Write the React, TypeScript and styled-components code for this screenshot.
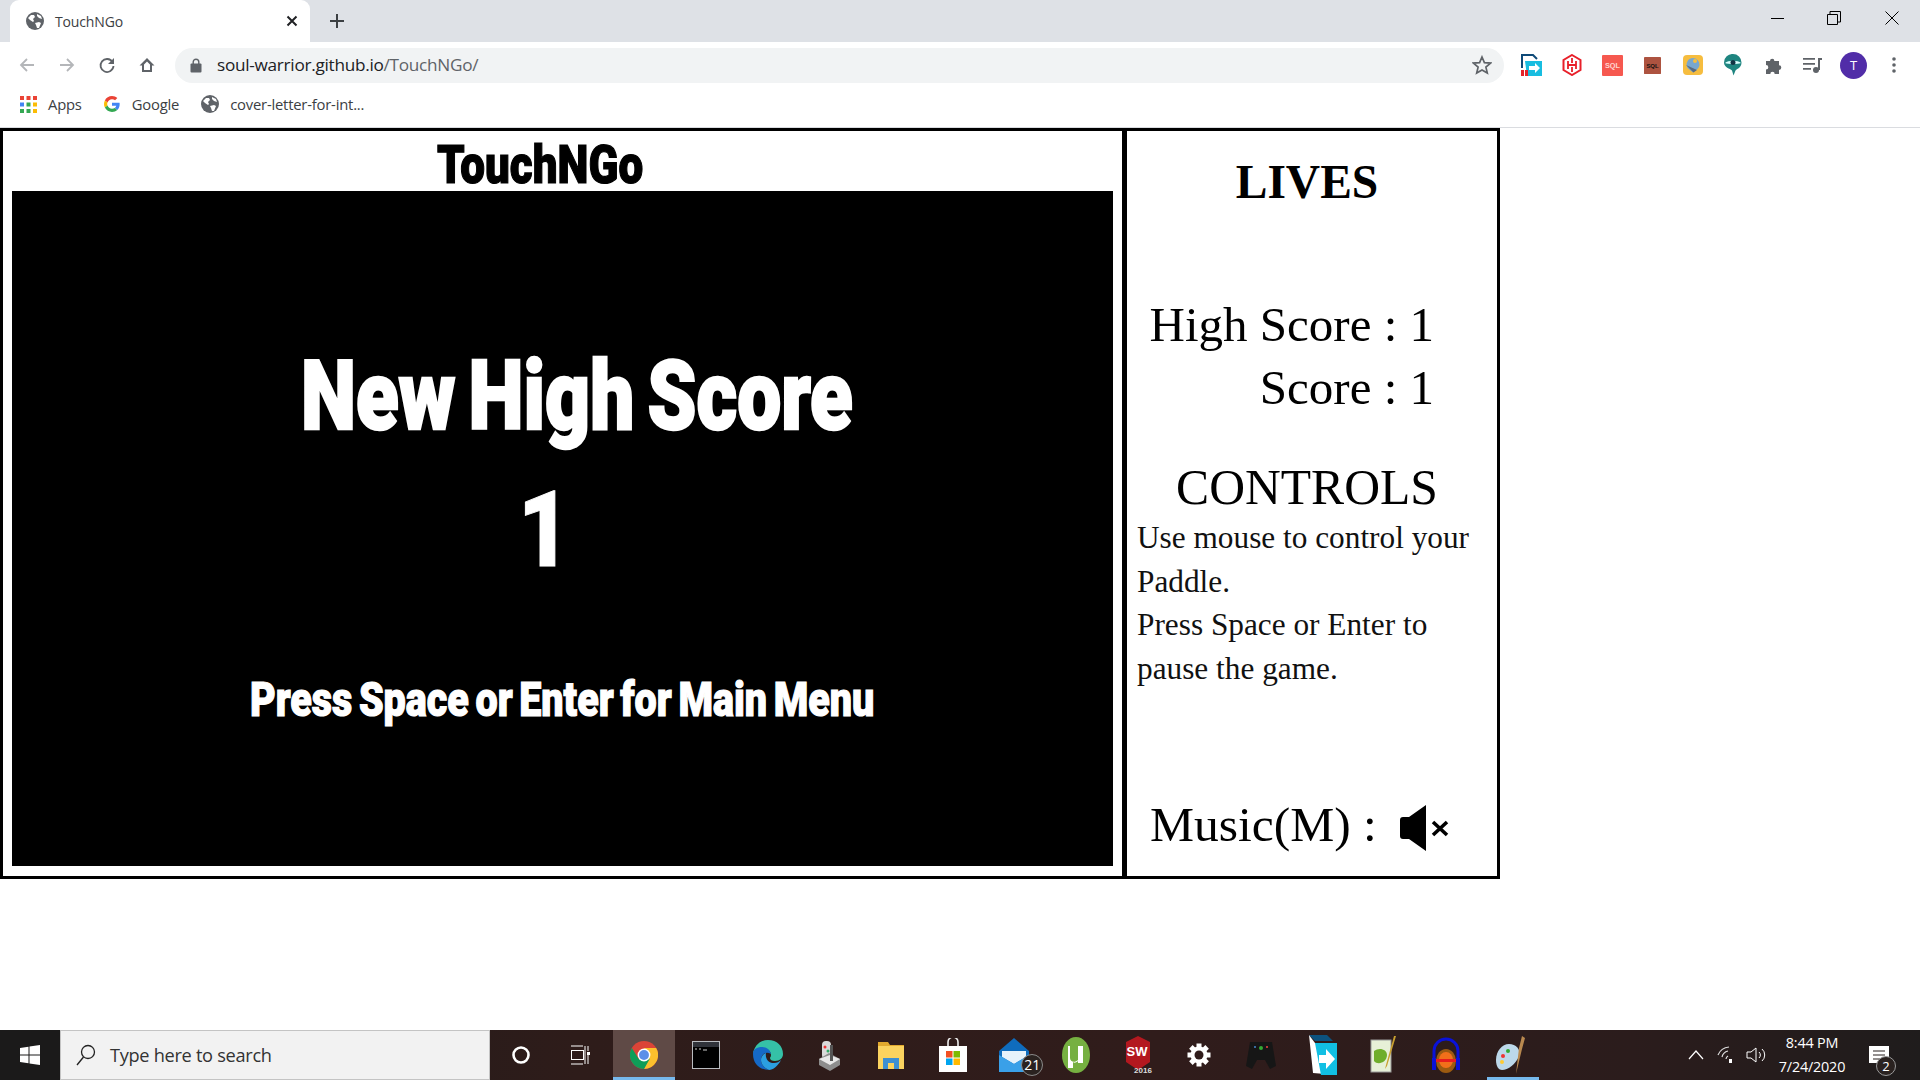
import React from "react";
import styled, { createGlobalStyle } from "styled-components";

const Global = createGlobalStyle`
  html, body { margin: 0; padding: 0; background: #fff; }
  * { box-sizing: border-box; }
`;

const UI = `"Open Sans", "Noto Sans", sans-serif`;
const SERIF = `"Liberation Serif", "Times New Roman", serif`;
const HEAVY = `Roboto, "Liberation Sans", Arial, sans-serif`;

const Page = styled.div`
  width: 1920px;
  height: 1080px;
  display: flex;
  flex-direction: column;
  overflow: hidden;
  background: #fff;
`;

/* ---------- browser chrome ---------- */
const TabStrip = styled.div`
  height: 42px;
  flex: none;
  background: #dee1e6;
  display: flex;
  align-items: flex-end;
  padding-left: 10px;
`;
const Tab = styled.div`
  width: 300px;
  height: 42px;
  background: #fff;
  border-radius: 9px 9px 0 0;
  display: flex;
  align-items: center;
  padding-left: 16px;
  padding-right: 12px;
  gap: 11px;
`;
const TabTitle = styled.span`
  flex: 1;
  font: 14px ${UI};
  letter-spacing: -0.15px;
  color: #3c4043;
`;
const NewTab = styled.div`
  width: 54px;
  height: 42px;
  display: flex;
  align-items: center;
  justify-content: center;
`;
const WindowButtons = styled.div`
  margin-left: auto;
  height: 36px;
  align-self: flex-start;
  display: flex;
`;
const WindowButton = styled.div`
  width: 57px;
  height: 36px;
  display: flex;
  align-items: center;
  justify-content: center;
  &:last-child {
    margin-left: 1px;
  }
`;
const Toolbar = styled.div`
  height: 46px;
  flex: none;
  background: #fff;
  display: flex;
  align-items: center;
  padding-left: 7px;
`;
const NavButton = styled.div`
  width: 40px;
  height: 40px;
  display: flex;
  align-items: center;
  justify-content: center;
`;
const Omnibox = styled.div`
  width: 1329px;
  height: 35px;
  margin-left: 8px;
  margin-right: 8px;
  border-radius: 18px;
  background: #f1f3f4;
  display: flex;
  align-items: center;
  padding-left: 15px;
  padding-right: 12px;
`;
const Url = styled.span`
  flex: 1;
  margin-left: 15px;
  margin-top: -2px;
  font: 17.2px ${UI};
  letter-spacing: -0.28px;
  color: #202124;
`;
const UrlPath = styled.span`
  color: #5f6368;
`;
const ExtensionSlot = styled.div`
  width: 40.2px;
  height: 40px;
  flex: none;
  display: flex;
  align-items: center;
  justify-content: center;
`;
const Avatar = styled.div`
  width: 27px;
  height: 27px;
  border-radius: 50%;
  background: #512da8;
  color: #fff;
  font: 13px ${UI};
  display: flex;
  align-items: center;
  justify-content: center;
`;
const Bookmarks = styled.div`
  height: 40px;
  flex: none;
  background: #fff;
  border-bottom: 1px solid #dadce0;
  display: flex;
  align-items: center;
  padding-left: 20px;
  padding-bottom: 7px;
`;
const Bookmark = styled.div<{ $gap: number; $next: number }>`
  display: flex;
  align-items: center;
  gap: ${(p) => p.$gap}px;
  margin-right: ${(p) => p.$next}px;
`;
const BookmarkLabel = styled.span`
  font: 14.8px ${UI};
  letter-spacing: -0.2px;
  color: #3c4043;
`;

/* ---------- game ---------- */
const Main = styled.main`
  flex: 1;
  min-height: 0;
  background: #fff;
`;
const Game = styled.div`
  display: flex;
  height: 751px;
  width: 1500px;
`;
const GamePanel = styled.section`
  width: 1125px;
  flex: none;
  border: 3px solid #000;
  padding-left: 9px;
  display: flex;
  flex-direction: column;
`;
const TitleRow = styled.div`
  height: 60px;
  width: 1100px;
`;
const ImpactText = styled.div<{ $size: number; $scale: number; $stroke: number; $height: number; $left: number; $top?: number; $word?: number }>`
  font-family: ${HEAVY};
  font-weight: 900;
  font-size: ${(p) => p.$size}px;
  line-height: ${(p) => p.$height}px;
  height: ${(p) => p.$height}px;
  -webkit-text-stroke: ${(p) => p.$stroke}px currentColor;
  word-spacing: ${(p) => p.$word ?? 0}em;
  white-space: nowrap;
  width: max-content;
  transform-origin: left center;
  transform: scaleX(${(p) => p.$scale});
  margin-left: ${(p) => p.$left}px;
  margin-top: ${(p) => p.$top ?? 0}px;
`;
const Title = styled(ImpactText)`
  color: #000;
`;
const Stage = styled.div`
  width: 1101px;
  height: 675px;
  background: #000;
  color: #fff;
  padding-top: 155px;
  overflow: hidden;
`;
const SidePanel = styled.aside`
  width: 375px;
  flex: none;
  border: 3px solid #000;
  border-left-width: 2px;
  padding-top: 23px;
  font-family: ${SERIF};
  color: #000;
  display: flex;
  flex-direction: column;
`;
const Lives = styled.h1`
  margin: 0;
  padding-right: 10px;
  font: 700 47.5px/56px ${SERIF};
  text-align: center;
`;
const Scores = styled.div`
  margin-top: 83px;
  padding-right: 63px;
  text-align: right;
  font-size: 49px;
  line-height: 63px;
`;
const Heading = styled.h2`
  margin: 41px 0 0;
  padding-right: 10px;
  font: 400 49.6px/56px ${SERIF};
  text-align: center;
`;
const Help = styled.p`
  margin: 0;
  padding-left: 10px;
  width: 360px;
  font-size: 31.3px;
  line-height: 43.6px;
  color: #111;
`;
const MusicRow = styled.div`
  margin-top: 107px;
  padding-left: 23px;
  display: flex;
  align-items: center;
  gap: 23px;
  font-size: 49.5px;
  line-height: 56px;
`;
const MuteSvg = styled.svg`
  margin-top: 6px;
`;

/* ---------- taskbar ---------- */
const Taskbar = styled.footer`
  height: 50px;
  flex: none;
  display: flex;
  align-items: stretch;
  background: linear-gradient(90deg, #1b1a1a 0%, #2e1c1a 30%, #301c1b 60%, #2b1c1c 85%, #1f1c1c 100%);
`;
const StartButton = styled.div`
  width: 60px;
  flex: none;
  display: flex;
  align-items: center;
  justify-content: center;
  background: #1b1a1a;
`;
const SearchBox = styled.div`
  width: 430px;
  flex: none;
  background: #f2f2f2;
  border: 1px solid #c4c4c4;
  display: flex;
  align-items: center;
  padding-left: 15px;
  gap: 14px;
`;
const SearchText = styled.span`
  font: 18.2px ${UI};
  letter-spacing: -0.3px;
  color: #333;
`;
const TaskSlot = styled.div<{ $active?: boolean; $open?: boolean }>`
  width: 61.7px;
  flex: none;
  display: flex;
  align-items: center;
  justify-content: center;
  position: relative;
  background: ${(p) => (p.$active ? "#5f4a46" : "transparent")};
  padding-left: ${(p) => (p.$open ? 6 : 0)}px;
  &::after {
    content: "";
    position: absolute;
    bottom: 0;
    height: 3px;
    left: ${(p) => (p.$open ? 10 : 0)}px;
    right: 0;
    background: ${(p) => (p.$active || p.$open ? "#76b9ed" : "transparent")};
  }
`;
const CountBadge = styled.span`
  position: absolute;
  right: 2px;
  bottom: 4px;
  width: 22px;
  height: 22px;
  border-radius: 50%;
  background: #2a2220;
  border: 1px solid #8a8a8a;
  color: #fff;
  font: 14px/20px ${UI};
  text-align: center;
`;
const Tray = styled.div`
  margin-left: auto;
  display: flex;
  align-items: stretch;
  padding-right: 15px;
`;
const TraySlot = styled.div`
  width: 30px;
  display: flex;
  align-items: center;
  justify-content: center;
`;
const Clock = styled.div`
  width: 82px;
  display: flex;
  flex-direction: column;
  align-items: center;
  justify-content: center;
  color: #fff;
  font: 14.4px/24px ${UI};
  letter-spacing: -0.2px;
`;
const Notify = styled.div`
  width: 52px;
  display: flex;
  align-items: center;
  justify-content: center;
  position: relative;
`;
const NotifyBadge = styled.span`
  position: absolute;
  right: 9px;
  bottom: 4px;
  width: 20px;
  height: 20px;
  border-radius: 50%;
  background: #2a2220;
  border: 1px solid #9a9a9a;
  color: #fff;
  font: 13px/18px ${UI};
  text-align: center;
`;

/* ---------- icons ---------- */
const Globe = () => (
  <svg width="18" height="18" viewBox="0 0 18 18">
    <circle cx="9" cy="9" r="9" fill="#5f6368" />
    <path d="M2 6l3-3 3 0 1 2-2 2 1 2-1 1-3-2zM9 11l4-1 2 1-2 5-2 0-1-3zM11 2l4 2 1 3-3-1-2-2z" fill="#fff" />
  </svg>
);
const Back = ({ flip }: { flip?: boolean }) => (
  <svg width="18" height="18" viewBox="0 0 18 18" style={flip ? { transform: "scaleX(-1)" } : undefined}>
    <path d="M16 9H3M9 3L3 9l6 6" stroke="#b4b6b9" strokeWidth="1.8" fill="none" />
  </svg>
);
const Reload = () => (
  <svg width="18" height="18" viewBox="0 0 18 18">
    <path d="M14.5 6A6.5 6.5 0 1 0 15.5 10" stroke="#5f6368" strokeWidth="1.8" fill="none" />
    <path d="M16 2v6h-6z" fill="#5f6368" />
  </svg>
);
const Home = () => (
  <svg width="18" height="18" viewBox="0 0 18 18">
    <path d="M9 2L1.5 9.5H4V16h10V9.5h2.5zM6 14V8.6l3-3 3 3V14z" fill="#5f6368" fillRule="evenodd" />
  </svg>
);
const Lock = () => (
  <svg width="12" height="15" viewBox="0 0 12 15">
    <path d="M3.2 6V4a2.8 2.8 0 0 1 5.6 0v2" stroke="#5f6368" strokeWidth="1.4" fill="none" />
    <rect x="0.5" y="5.5" width="11" height="9" rx="1" fill="#5f6368" />
  </svg>
);
const Star = () => (
  <svg width="20" height="20" viewBox="0 0 20 20">
    <path d="M10 2l2.4 5.6 6.1.5-4.6 4 1.4 6L10 15l-5.3 3.1 1.4-6-4.6-4 6.1-.5z" fill="none" stroke="#5f6368" strokeWidth="1.7" />
  </svg>
);
const ExtTransfer = () => (
  <svg width="22" height="22" viewBox="0 0 22 22">
    <path d="M1 14V1h11l4 4" fill="none" stroke="#0f4a78" strokeWidth="2" />
    <path d="M4 7h17v15H6z" fill="#18bde0" />
    <path d="M8 12h6V9l5 5-5 5v-3H8z" fill="#fff" />
    <rect x="0" y="16" width="3" height="6" fill="#e6242a" />
    <rect x="4" y="16" width="3" height="6" fill="#e6242a" />
  </svg>
);
const ExtHex = () => (
  <svg width="20" height="22" viewBox="0 0 20 22">
    <path d="M10 1l8.5 5v10L10 21l-8.5-5V6z" fill="none" stroke="#e8202a" strokeWidth="2" />
    <path d="M6 7v8M14 7v8M6 11h8M10 4v5M10 13v5" stroke="#e8202a" strokeWidth="1.8" fill="none" />
  </svg>
);
const ExtSql = ({ bg, fg, size, label }: { bg: string; fg: string; size: number; label: string }) => (
  <svg width={size} height={size} viewBox="0 0 20 20">
    <rect width="20" height="20" fill={bg} rx="1" />
    <text x="10" y="12.5" textAnchor="middle" fontSize="7" fontWeight="700" fontFamily="Liberation Sans" fill={fg}>
      {label}
    </text>
  </svg>
);
const ExtPin = () => (
  <svg width="20" height="20" viewBox="0 0 20 20">
    <rect width="20" height="20" rx="4" fill="#f6bd3f" />
    <path d="M10 3a6.5 6.5 0 0 1 6.5 6.5c0 2-1 3.3-2 4.5L10 17.5 5 13.5a6.5 6.5 0 0 1 5-10.5z" fill="#78a7cf" />
    <path d="M3 10l11 5-3.5 2.5z" fill="#5a6b80" />
    <circle cx="12" cy="6" r="2" fill="#f6bd3f" />
  </svg>
);
const ExtEye = () => (
  <svg width="18" height="22" viewBox="0 0 18 22">
    <path d="M9 0a8.5 8.5 0 0 1 8.5 8.5c0 5-4 6-6 8l-2 5-1.5-5c-2-2-8-3-8-8A8.5 8.5 0 0 1 9 0z" fill="#1f8580" />
    <path d="M1 9c3-3 13-3 16 0-3 1.5-13 1.5-16 0z" fill="#dff" />
    <circle cx="9" cy="8.5" r="2.5" fill="#134" />
  </svg>
);
const Puzzle = () => (
  <svg width="19" height="19" viewBox="0 0 19 19">
    <path d="M2 5h4a2.2 2.2 0 1 1 4.4 0H15v4.3a2.3 2.3 0 1 1 0 4.6V18h-4.3a2.2 2.2 0 1 0-4.4 0H2v-4.5a2.3 2.3 0 1 0 0-4.6z" fill="#5f6368" />
  </svg>
);
const QueueMusic = () => (
  <svg width="20" height="18" viewBox="0 0 20 18">
    <path d="M0 2h12v1.8H0zM0 7h12v1.8H0zM0 12h8v1.8H0z" fill="#5f6368" />
    <circle cx="13" cy="14" r="3" fill="#5f6368" />
    <path d="M15 14V2h4v2h-2v10z" fill="#5f6368" />
  </svg>
);
const Kebab = () => (
  <svg width="4" height="18" viewBox="0 0 4 18">
    <circle cx="2" cy="3" r="1.8" fill="#5f6368" />
    <circle cx="2" cy="9" r="1.8" fill="#5f6368" />
    <circle cx="2" cy="15" r="1.8" fill="#5f6368" />
  </svg>
);
const AppsGrid = () => {
  const c = ["#ea4335", "#ea4335", "#ea4335", "#4285f4", "#34a853", "#fbbc05", "#34a853", "#34a853", "#fbbc05"];
  return (
    <svg width="17" height="17" viewBox="0 0 17 17">
      {c.map((f, i) => (
        <rect key={i} x={(i % 3) * 6.5} y={Math.floor(i / 3) * 6.5} width="4" height="4" fill={f} />
      ))}
    </svg>
  );
};
const GoogleG = () => (
  <svg width="16" height="16" viewBox="0 0 48 48">
    <path fill="#EA4335" d="M24 9.5c3.5 0 6.7 1.2 9.2 3.6l6.9-6.9C35.9 2.4 30.5 0 24 0 14.6 0 6.5 5.4 2.6 13.2l8 6.2C12.5 13.7 17.8 9.5 24 9.5z" />
    <path fill="#4285F4" d="M47 24.5c0-1.6-.1-3.1-.4-4.5H24v9h12.9c-.6 3-2.2 5.5-4.8 7.2l7.7 6c4.5-4.2 7.2-10.3 7.2-17.7z" />
    <path fill="#FBBC05" d="M10.6 28.6A14.5 14.5 0 0 1 9.5 24c0-1.6.3-3.2 1.1-4.6l-8-6.2C1 16.4 0 20.1 0 24s1 7.6 2.6 10.8z" />
    <path fill="#34A853" d="M24 48c6.5 0 11.9-2.1 15.8-5.8l-7.7-6c-2.1 1.4-4.9 2.3-8.1 2.3-6.2 0-11.5-4.2-13.4-9.9l-8 6.2C6.5 42.6 14.6 48 24 48z" />
  </svg>
);
const MuteIcon = () => (
  <MuteSvg width="50" height="46" viewBox="0 0 50 46">
    <path d="M0 15c0-2 1-3 3-3h6L26 0v46L9 34H3c-2 0-3-1-3-3z" fill="#000" />
    <path d="M33 17l14 13M47 17L33 30" stroke="#000" strokeWidth="3.6" fill="none" />
  </MuteSvg>
);
const Win = () => (
  <svg width="20" height="20" viewBox="0 0 20 20">
    <path d="M0 3l8.5-1.3v7.8H0zM9.5 1.500L20 0v9.500H9.500zM0 10.500h8.500v7.800L0 17zM9.500 10.500H20V20L9.500 18.500z" fill="#fff" />
  </svg>
);
const SearchGlass = () => (
  <svg width="20" height="22" viewBox="0 0 20 22">
    <circle cx="12" cy="8" r="6.5" fill="none" stroke="#222" strokeWidth="1.3" />
    <path d="M7.5 13L1 21" stroke="#222" strokeWidth="1.3" />
  </svg>
);
const Cortana = () => (
  <svg width="20" height="20" viewBox="0 0 20 20">
    <circle cx="10" cy="10" r="7.5" fill="none" stroke="#fff" strokeWidth="2.6" />
  </svg>
);
const TaskView = () => (
  <svg width="20" height="20" viewBox="0 0 20 20" style={{ marginRight: 6 }}>
    <path d="M1 1h12M1 19h12M15 1v18M18 1v5M18 8v11" stroke="#fff" strokeWidth="1" fill="none" />
    <rect x="1.5" y="5.5" width="12" height="9" fill="none" stroke="#fff" />
    <rect x="17" y="7" width="3" height="3" fill="#fff" />
  </svg>
);
const Chrome = () => (
  <svg width="28" height="28" viewBox="0 0 48 48">
    <circle cx="24" cy="24" r="24" fill="#db4437" />
    <path d="M24 48a24 24 0 0 0 20.8-36H24l9 16z" fill="#fbc02d" />
    <path d="M3.2 12A24 24 0 0 0 24 48l10-17.5-19 .5z" fill="#0f9d58" />
    <circle cx="24" cy="24" r="11" fill="#fff" />
    <circle cx="24" cy="24" r="8.5" fill="#5c8fe8" />
  </svg>
);
const Terminal = () => (
  <svg width="28" height="28" viewBox="0 0 28 28">
    <rect width="28" height="28" fill="#b9bcc0" />
    <rect x="1" y="6" width="26" height="21" fill="#000" />
    <rect x="1" y="1" width="26" height="5" fill="#30333a" />
    <path d="M3 8h2M7 8h2M11 9h4" stroke="#ccc" />
  </svg>
);
const Edge = () => (
  <svg width="30" height="30" viewBox="0 0 30 30">
    <path d="M15 0c9 0 15 6 15 14 0 4-3 7-8 7-3 0-5-1-5-3 0-1 1-1 1-3 0-4-4-7-9-7S1 11 0 14C1 6 7 0 15 0z" fill="#35c1a7" />
    <path d="M0 14c0-5 4-7 9-7s8 3 9 7c-5-3-10 0-10 6 0 4 3 8 8 10C7 30 0 24 0 14z" fill="#1569c7" />
    <path d="M28 20c-3 6-8 10-12 10-5-2-8-6-8-10 0-3 2-6 5-7-1 5 2 10 8 10 3 0 5-1 7-3z" fill="#2b9fe0" />
  </svg>
);
const Joystick = () => (
  <svg width="26" height="32" viewBox="0 0 26 32">
    <rect x="6" y="2" width="9" height="18" rx="4" fill="#d9d9d9" />
    <circle cx="9" cy="8" r="1.5" fill="#e33" />
    <circle cx="12" cy="12" r="1.5" fill="#3a6" />
    <path d="M3 20l10-6 11 6v6l-10 6-11-6z" fill="#8d8d8d" />
    <path d="M3 20l11 6 10-6-10-4z" fill="#e8e8e8" />
    <rect x="14" y="6" width="3" height="16" fill="#555" />
  </svg>
);
const Folder = () => (
  <svg width="28" height="28" viewBox="0 0 28 28">
    <path d="M1 1h10l2 3h14v5H1z" fill="#e2a92e" />
    <rect x="1" y="5" width="26" height="23" fill="#fbd35f" />
    <path d="M6 28V17h16v11h-5v-6h-6v6z" fill="#3d8fd1" />
  </svg>
);
const Store = () => (
  <svg width="28" height="34" viewBox="0 0 28 34">
    <path d="M9 8V4a5 5 0 0 1 10 0v4" fill="none" stroke="#eee" strokeWidth="1.6" />
    <rect y="8" width="28" height="26" fill="#fff" />
    <rect x="7" y="13" width="6.5" height="6.5" fill="#f25022" />
    <rect x="14.5" y="13" width="6.5" height="6.5" fill="#7fba00" />
    <rect x="7" y="20.5" width="6.5" height="6.5" fill="#00a4ef" />
    <rect x="14.5" y="20.5" width="6.5" height="6.5" fill="#ffb900" />
  </svg>
);
const Mail = () => (
  <svg width="30" height="34" viewBox="0 0 30 34">
    <path d="M15 0l15 13v21H0V13z" fill="#0f6cbd" />
    <path d="M3 13h24v6L15 26 3 19z" fill="#e6f2fb" />
    <path d="M0 17l15 9 15-9v17H0z" fill="#3aa0e8" />
  </svg>
);
const UTorrent = () => (
  <svg width="30" height="36" viewBox="0 0 30 36">
    <ellipse cx="15" cy="18" rx="14" ry="18" fill="#76b041" />
    <path d="M9 9v12c0 4 5 5 8 2V9h5v17h-5v-2c-2 2-4 2-5 1v6H7V9z" fill="#fff" />
  </svg>
);
const Solid = () => (
  <svg width="30" height="38" viewBox="0 0 30 38">
    <path d="M3 6l12-6 12 6v20l-12 8-12-8z" fill="#b3181f" />
    <text x="14" y="20" fontSize="13" fontWeight="700" fontFamily="Liberation Sans" textAnchor="middle" fill="#fff">SW</text>
    <text x="20" y="37" fontSize="8" fontWeight="700" fontFamily="Liberation Sans" textAnchor="middle" fill="#ddd">2016</text>
  </svg>
);
const Gear = () => (
  <svg width="24" height="24" viewBox="0 0 24 24">
    {[0, 45, 90, 135].map((a) => (
      <rect key={a} x="9.5" y="0.5" width="5" height="23" fill="#fff" transform={`rotate(${a} 12 12)`} />
    ))}
    <circle cx="12" cy="12" r="8.5" fill="#fff" />
    <circle cx="12" cy="12" r="4.5" fill="#301c1b" />
  </svg>
);
const Pad = () => (
  <svg width="32" height="30" viewBox="0 0 32 30">
    <path d="M5 2h22l4 24-6 3-5-9h-8l-5 9-6-3z" fill="#161616" />
    <circle cx="16" cy="8" r="2" fill="#3a3" />
    <circle cx="22" cy="7" r="1" fill="#e44" />
    <circle cx="10" cy="7" r="1" fill="#48c" />
  </svg>
);
const ArrowApp = () => (
  <svg width="28" height="40" viewBox="0 0 28 40">
    <path d="M0 0h18l6 6H6z" fill="#0c527f" />
    <path d="M0 0l4 38 24 2V10L6 8z" fill="#fff" />
    <path d="M6 8h22v32H12z" fill="#11bfe3" />
    <path d="M10 20h7v-6l9 10-9 10v-6h-7z" fill="#fff" />
  </svg>
);
const Notepad = () => (
  <svg width="28" height="38" viewBox="0 0 28 38">
    <rect x="1" y="4" width="20" height="32" fill="#e7f0d7" stroke="#999" />
    <path d="M4 15c5-4 13-2 13 4 0 7-9 11-13 6z" fill="#6fae2b" />
    <path d="M26 0l-9 30-2 3 1-4L24 0z" fill="#c9a030" />
  </svg>
);
const Headphones = () => (
  <svg width="30" height="38" viewBox="0 0 30 38">
    <path d="M3 26V15a12 12 0 0 1 24 0v11" fill="none" stroke="#0a12d8" strokeWidth="3" />
    <ellipse cx="15" cy="25" rx="10" ry="12" fill="#9c5a10" />
    <ellipse cx="15" cy="24" rx="7" ry="8" fill="#f2701a" />
    <rect x="5" y="23" width="20" height="3" fill="#e81d1d" />
    <rect x="1" y="22" width="4" height="12" fill="#0a12d8" />
    <rect x="25" y="22" width="4" height="12" fill="#0a12d8" />
  </svg>
);
const Palette = () => (
  <svg width="30" height="38" viewBox="0 0 30 38">
    <path d="M13 8C6 8 0 15 0 24c0 7 3 10 6 10 6 0 14-6 17-14 2-7-3-12-10-12z" fill="#bcd8ea" />
    <circle cx="7" cy="20" r="2" fill="#e33" />
    <circle cx="12" cy="15" r="2" fill="#3a3" />
    <circle cx="6" cy="26" r="2" fill="#fc3" />
    <path d="M20 38l3-26 3-12 3 2-3 11z" fill="#b9894f" />
  </svg>
);

const Flat = ({ d, w = 14 }: { d: string; w?: number }) => (
  <svg width={w} height={w} viewBox="0 0 14 14">
    <path d={d} stroke="#000" strokeWidth="1" fill="none" />
  </svg>
);

const slots: { icon: React.ReactNode; active?: boolean; open?: boolean; badge?: string }[] = [
  { icon: <Cortana /> },
  { icon: <TaskView /> },
  { icon: <Chrome />, active: true },
  { icon: <Terminal /> },
  { icon: <Edge /> },
  { icon: <Joystick /> },
  { icon: <Folder /> },
  { icon: <Store /> },
  { icon: <Mail />, badge: "21" },
  { icon: <UTorrent /> },
  { icon: <Solid /> },
  { icon: <Gear /> },
  { icon: <Pad /> },
  { icon: <ArrowApp /> },
  { icon: <Notepad /> },
  { icon: <Headphones /> },
  { icon: <Palette />, open: true },
];

export default function App() {
  return (
    <Page>
      <Global />
      <TabStrip>
        <Tab>
          <Globe />
          <TabTitle>TouchNGo</TabTitle>
          <svg width="12" height="12" viewBox="0 0 12 12">
            <path d="M1.5 1.5l9 9M10.5 1.5l-9 9" stroke="#202124" strokeWidth="2" />
          </svg>
        </Tab>
        <NewTab>
          <svg width="16" height="16" viewBox="0 0 16 16">
            <path d="M8 1v14M1 8h14" stroke="#3c4043" strokeWidth="2" />
          </svg>
        </NewTab>
        <WindowButtons>
          <WindowButton><Flat d="M1 7.5h13" /></WindowButton>
          <WindowButton><Flat d="M0.5 3.5h10v10h-10zM3 3V0.5h10.5V11H11" /></WindowButton>
          <WindowButton><Flat d="M0.5 0.5l13 13M13.5 0.5l-13 13" /></WindowButton>
        </WindowButtons>
      </TabStrip>
      <Toolbar>
        <NavButton><Back /></NavButton>
        <NavButton><Back flip /></NavButton>
        <NavButton><Reload /></NavButton>
        <NavButton><Home /></NavButton>
        <Omnibox>
          <Lock />
          <Url>soul-warrior.github.io<UrlPath>/TouchNGo/</UrlPath></Url>
          <Star />
        </Omnibox>
        <ExtensionSlot><ExtTransfer /></ExtensionSlot>
        <ExtensionSlot><ExtHex /></ExtensionSlot>
        <ExtensionSlot><ExtSql bg="#f6584f" fg="#ffd5d0" size={21} label="SQL" /></ExtensionSlot>
        <ExtensionSlot><ExtSql bg="#ad5340" fg="#111" size={17} label="SQL" /></ExtensionSlot>
        <ExtensionSlot><ExtPin /></ExtensionSlot>
        <ExtensionSlot><ExtEye /></ExtensionSlot>
        <ExtensionSlot><Puzzle /></ExtensionSlot>
        <ExtensionSlot><QueueMusic /></ExtensionSlot>
        <ExtensionSlot><Avatar>T</Avatar></ExtensionSlot>
        <ExtensionSlot><Kebab /></ExtensionSlot>
      </Toolbar>
      <Bookmarks>
        <Bookmark $gap={11} $next={22}><AppsGrid /><BookmarkLabel>Apps</BookmarkLabel></Bookmark>
        <Bookmark $gap={12} $next={22}><GoogleG /><BookmarkLabel>Google</BookmarkLabel></Bookmark>
        <Bookmark $gap={11} $next={0}><Globe /><BookmarkLabel>cover-letter-for-int...</BookmarkLabel></Bookmark>
      </Bookmarks>
      <Main>
        <Game>
          <GamePanel>
            <TitleRow>
              <Title $size={53} $scale={0.83} $stroke={1.2} $height={60} $left={425} $top={4}>TouchNGo</Title>
            </TitleRow>
            <Stage>
              <ImpactText $size={96} $scale={0.815} $stroke={2.5} $height={100} $left={289} $word={-0.08}>New High Score</ImpactText>
              <ImpactText $size={105} $scale={0.86} $stroke={1} $height={100} $left={506} $top={35}>1</ImpactText>
              <ImpactText $size={48} $scale={0.822} $stroke={1.2} $height={60} $left={238} $top={89} $word={-0.08}>Press Space or Enter for Main Menu</ImpactText>
            </Stage>
          </GamePanel>
          <SidePanel>
            <Lives>LIVES</Lives>
            <Scores>
              <div>High Score : 1</div>
              <div>Score : 1</div>
            </Scores>
            <Heading>CONTROLS</Heading>
            <Help>
              Use mouse to control your Paddle.
              <br />
              Press Space or Enter to pause the game.
            </Help>
            <MusicRow>
              <span>Music(M) :</span>
              <MuteIcon />
            </MusicRow>
          </SidePanel>
        </Game>
      </Main>
      <Taskbar>
        <StartButton><Win /></StartButton>
        <SearchBox>
          <SearchGlass />
          <SearchText>Type here to search</SearchText>
        </SearchBox>
        {slots.map((s, i) => (
          <TaskSlot key={i} $active={s.active} $open={s.open}>
            {s.icon}
            {s.badge && <CountBadge>{s.badge}</CountBadge>}
          </TaskSlot>
        ))}
        <Tray>
          <TraySlot>
            <svg width="16" height="10" viewBox="0 0 16 10">
              <path d="M1 9l7-8 7 8" stroke="#fff" strokeWidth="1.2" fill="none" />
            </svg>
          </TraySlot>
          <TraySlot>
            <svg width="18" height="18" viewBox="0 0 18 18">
              <path d="M1 9a13 13 0 0 1 11-8M5 11a8 8 0 0 1 6-6M9 13a4 4 0 0 1 2-3" stroke="#ddd" strokeWidth="1.2" fill="none" />
              <rect x="12" y="13" width="3" height="4" fill="#fff" />
            </svg>
          </TraySlot>
          <TraySlot>
            <svg width="20" height="18" viewBox="0 0 20 18">
              <path d="M1 6h4l5-4v14l-5-4H1z" stroke="#fff" fill="none" />
              <path d="M13 6a4 4 0 0 1 0 6M16 3a8 8 0 0 1 0 12" stroke="#fff" fill="none" />
            </svg>
          </TraySlot>
          <Clock>
            <span>8:44 PM</span>
            <span>7/24/2020</span>
          </Clock>
          <Notify>
            <svg width="20" height="18" viewBox="0 0 20 18">
              <path d="M0 0h20v17H0z" fill="#fff" />
              <path d="M4 5h12M4 9h12M4 13h8" stroke="#2a2220" strokeWidth="1.2" />
            </svg>
            <NotifyBadge>2</NotifyBadge>
          </Notify>
        </Tray>
      </Taskbar>
    </Page>
  );
}
